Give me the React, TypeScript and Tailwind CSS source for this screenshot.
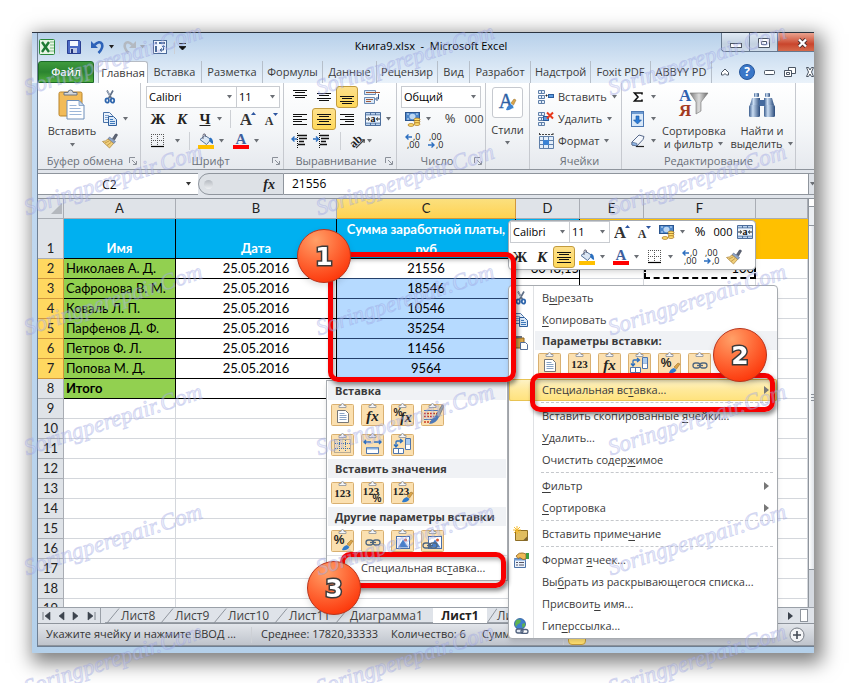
import React from "react";
import clsx from "clsx";

interface BoxProps {
  className?: string;
  children?: React.ReactNode;
}

interface ToolProps extends BoxProps {
  label: string;
  active?: boolean;
}

/* ---------- small building blocks ---------- */

const Icon: React.FC<BoxProps & { w?: number; h?: number }> = ({ w = 16, h = 16, className, children }) => (
  <svg width={w} height={h} viewBox={`0 0 ${w} ${h}`} fill="none" className={clsx("shrink-0", className)} aria-hidden="true">
    {children}
  </svg>
);

const Caret: React.FC<BoxProps> = ({ className = "text-[#6b6f75]" }) => (
  <Icon w={7} h={4} className={className}>
    <path d="M1 0h5L3.5 3.5z" fill="currentColor" />
  </Icon>
);

const Tool: React.FC<ToolProps> = ({ label, active, className, children }) => (
  <button
    type="button"
    aria-label={label}
    className={clsx(
      "flex h-[22px] shrink-0 items-center justify-center",
      active && "rounded-[3px] border border-[#c29b3d] bg-linear-to-b from-[#fde08b] to-[#ffd95a]",
      className
    )}
  >
    {children}
  </button>
);

const Divider: React.FC<BoxProps> = ({ className = "h-[18px]" }) => (
  <span className={clsx("w-px shrink-0 bg-[#cdd0d5]", className)} />
);

const Combo: React.FC<{ label: string; value: string; className?: string }> = ({ label, value, className }) => (
  <div className={clsx("relative h-[22px] shrink-0 border border-[#c9ccd1] bg-white", className)}>
    <select aria-label={label} defaultValue={value} className="block h-full w-full appearance-none pl-[2px] text-[11px] text-black outline-none">
      <option>{value}</option>
    </select>
    <Caret className="pointer-events-none absolute top-2 right-[3px] text-[#6b6f75]" />
  </div>
);

/* ---------- icons ---------- */

const Lines: React.FC<{ rows: [number, number][]; top?: number }> = ({ rows, top = 1 }) => (
  <Icon>
    {rows.map(([x, w], i) => (
      <rect key={i} x={x} y={top + Math.floor(i * 2.5)} width={w} height="1" fill="#111" />
    ))}
  </Icon>
);

const edge: [number, number][] = [[1, 14], [3, 10], [1, 14], [3, 10]];
const leftRows: [number, number][] = [[1, 14], [1, 9], [1, 14], [1, 9], [1, 14]];
const centerRows: [number, number][] = [[1, 14], [3, 10], [1, 14], [3, 10], [1, 14]];
const rightRows: [number, number][] = [[1, 14], [6, 9], [1, 14], [6, 9], [1, 14]];

const ScissorsIcon = () => (
  <Icon>
    <path d="M5 1.500l4.500 8M11 1.500L6.500 9.500" stroke="#5f6f86" strokeWidth="1.600" />
    <path d="M5.500 2l2.500 5" stroke="#c8d3e2" strokeWidth=".7" />
    <ellipse cx="5.200" cy="11.500" rx="1.700" ry="2.200" stroke="#2f66ad" strokeWidth="1.800" />
    <ellipse cx="10.500" cy="11.500" rx="1.700" ry="2.200" stroke="#2f66ad" strokeWidth="1.800" />
  </Icon>
);

const CopyIcon = () => (
  <Icon>
    <path d="M1.500 1.500h6l3 3v7h-9z" fill="#eaf2fb" stroke="#4a73a8" />
    <path d="M3 4.500h4M3 6.500h5M3 8.500h4" stroke="#7ba0cd" />
    <path d="M6.500 5.500h5l3 3v6h-8z" fill="#d9e8f8" stroke="#2f5f9d" />
    <path d="M8 8.500h3M8 10.500h5M8 12.500h5" stroke="#3f79bb" />
  </Icon>
);

const BrushIcon = () => (
  <Icon>
    <path d="M10.500 5.500l3-4.500q1.500-.5 2 1L12.500 7z" fill="#5d6576" stroke="#3c4250" strokeWidth=".6" />
    <path d="M7.500 4l6 4.500-1.500 2-6-4.500z" fill="#8fa6c8" stroke="#56688a" strokeWidth=".6" />
    <path d="M6 6l5.500 4.500L7.500 15 .5 8.500q3 0 5.500-2.500z" fill="#f0cf7a" stroke="#a8813a" strokeWidth=".7" />
    <path d="M3 10l4-2M5 12.500l4-3" stroke="#b98d3c" strokeWidth=".8" />
  </Icon>
);

const BordersIcon = () => (
  <Icon>
    <path d="M1.500 1v12M7.500 1v12M13.500 1v12M1 1.500h13M1 7.500h13" stroke="#555" strokeDasharray="1 1" />
    <path d="M1 13.500h13" stroke="#000" strokeWidth="1.200" />
  </Icon>
);

const BucketIcon = () => (
  <Icon>
    <path d="M2 6.500l5-4 6 4-4.500 5z" fill="#dbe7f5" stroke="#58759c" />
    <path d="M5 6V2.500Q5 .5 7 1l1 3" stroke="#667" strokeWidth="1" />
    <path d="M12 4.500q3.500 1 3 6.500Q12.500 10 11 7.500z" fill="#2a6fc0" />
    <rect y="12" width="16" height="4" fill="#ffc000" />
  </Icon>
);

const FontColorIcon = () => (
  <Icon>
    <text x="8" y="11" textAnchor="middle" fontSize="15" fontWeight="700" fontFamily="Liberation Serif, serif" fill="#3f5f9e">A</text>
    <rect y="12" width="16" height="4" fill="#f00" />
  </Icon>
);

const FontStepIcon: React.FC<{ grow?: boolean }> = ({ grow }) => (
  <Icon>
    <text x="6" y="14" textAnchor="middle" fontSize={grow ? 17 : 12} fontWeight="700" fontFamily="Liberation Serif, serif" fill="#333">A</text>
    <path d={grow ? "M11 4h5l-2.500-3z" : "M10 2h5l-2.500 3z"} fill="#2d55a0" />
  </Icon>
);

const WrapIcon = () => (
  <Icon>
    <path d="M.5 1.500h11v4H.5z" fill="#dce9f7" stroke="#6d8db6" />
    <path d="M.5 8.500h10v6H.5z" fill="#dce9f7" stroke="#6d8db6" />
    <path d="M2 3.500h14M2 10.500h7M2 12.500h5" stroke="#a3593a" strokeWidth="1.200" />
    <path d="M14.500 5v5h-2M13.500 8l-2 2 2 2" stroke="#35568a" />
  </Icon>
);

const MergeIcon = () => (
  <Icon>
    <path d="M.5 1.500h15v13H.5z" fill="#b9d2ee" stroke="#4d6e9c" />
    <path d="M5.500 1v3M10.500 1v3M5.500 12v3M10.500 12v3M0 4h16M0 12h16" stroke="#4d6e9c" />
    <path d="M1 4.500h14v7H1z" fill="#eef5fc" />
    <text x="8" y="11" textAnchor="middle" fontSize="10" fontWeight="700" fontFamily="Liberation Serif, serif" fill="#111">a</text>
    <path d="M1 8h3M12 8h3M3 6.500L4.800 8 3 9.500M13 6.500L11.200 8 13 9.500" stroke="#111" strokeWidth=".9" />
  </Icon>
);

const IndentIcon: React.FC<{ increase?: boolean }> = ({ increase }) => (
  <Icon>
    <path d="M7 2.500h9M8 5.500h8M8 8.500h5M7 11.500h7" stroke="#111" strokeWidth="1.400" />
    <path d="M6.500 0v16" stroke="#111" strokeDasharray="1 1" />
    <path d={increase ? "M0 6h5M3 3.500L5.500 6 3 8.500" : "M1 6h5M3.500 3.500L1 6l2.500 2.500"} stroke="#2c6fc0" strokeWidth="1.400" />
  </Icon>
);

const OrientationIcon = () => (
  <Icon>
    <text x="0" y="12" fontSize="12" fontWeight="700" fontFamily="Liberation Serif, serif" fill="#222" transform="rotate(-42 6 9)">ab</text>
    <path d="M6 15l8-8M14.500 6.500l-3.500.5M14.500 6.500L14 10" stroke="#444" strokeWidth="1.100" />
  </Icon>
);

const CurrencyIcon = () => (
  <Icon>
    <rect x=".5" y="1.500" width="14" height="8" fill="#4d86c9" stroke="#2b558f" />
    <ellipse cx="7.500" cy="5.500" rx="3" ry="2.700" fill="#bcd7f3" />
    <path d="M2 3h2M11 3h2M2 8h2" stroke="#cfe2f7" />
    <ellipse cx="12" cy="8.500" rx="3" ry="1.400" fill="#ffdf70" stroke="#a66f12" strokeWidth=".7" />
    <ellipse cx="12" cy="10.800" rx="3" ry="1.400" fill="#ffdf70" stroke="#a66f12" strokeWidth=".7" />
    <ellipse cx="12" cy="13.100" rx="3" ry="1.400" fill="#ffdf70" stroke="#a66f12" strokeWidth=".7" />
    <ellipse cx="6" cy="14" rx="3" ry="1.400" fill="#ffdf70" stroke="#a66f12" strokeWidth=".7" />
  </Icon>
);

const DigitsIcon: React.FC<{ less?: boolean }> = ({ less }) => (
  <Icon>
    <text x={less ? 1 : 8} y="7" fontSize="9" fontFamily="Open Sans, sans-serif" fill="#222">{less ? ",00" : ",0"}</text>
    <text x={less ? 8 : 2} y="15" fontSize="9" fontFamily="Open Sans, sans-serif" fill="#222">{less ? ",0" : ",00"}</text>
    <path d={less ? "M0 12h6M3.500 9.500L6 12l-2.500 2.500" : "M1 4h6M3.500 1.500L1 4l2.500 2.500"} stroke="#2c6fc0" strokeWidth="1.400" />
  </Icon>
);

const CellsIcon: React.FC<{ kind: "insert" | "delete" | "format" }> = ({ kind }) => (
  <Icon>
    {kind === "format" ? (
      <>
        <path d="M1.500 3.500h14v12h-14zM1 7.500h15M1 11.500h15M5.500 3v13M10.500 3v13" fill="#e3eefa" stroke="#5f7fa9" />
        <rect x="5" y="7" width="6" height="5" fill="#3b82d4" />
        <path d="M1 1.500h14M1.500 0v3M15 0v3" stroke="#444" strokeDasharray="2 1" />
      </>
    ) : (
      <>
        <path d="M.5 1.500h6v3h-6zM.5 6.500h6v3h-6zM.5 11.500h6v3h-6zM3.500 2v3M3.500 7v3M3.500 12v3" fill="#e3eefa" stroke="#5f7fa9" />
        {kind === "insert" ? (
          <>
            <path d="M7.500 6.500h2M8.500 5.500v2" stroke="#222" />
            <rect x="10.500" y="5.500" width="5" height="3" fill="#5c9be0" stroke="#2c5c9b" />
          </>
        ) : (
          <>
            <rect x="5.500" y="5.500" width="5" height="4" fill="#5c9be0" stroke="#2c5c9b" />
            <path d="M9 1.500l6 6M15 1.500l-6 6" stroke="#e8391c" strokeWidth="2" />
          </>
        )}
      </>
    )}
  </Icon>
);

const FillIcon = () => (
  <Icon>
    <rect x="1.500" y=".5" width="12" height="15" fill="#d8e8f9" stroke="#4b78b3" />
    <path d="M2 2h11" stroke="#6c9ad1" strokeWidth="2" />
    <path d="M6 5h3v4h2.500L7.500 13 3.500 9H6z" fill="#2b7bd6" stroke="#1b559c" strokeWidth=".6" />
  </Icon>
);

const EraserIcon = () => (
  <Icon>
    <path d="M9 2l5 1.500-1 3L7 13l-5-1V9z" fill="#f5f8fd" stroke="#56688a" />
    <path d="M2 9l5 1.500V13l-5-1z" fill="#8db5e6" stroke="#56688a" strokeWidth=".7" />
    <path d="M6 13.500h8" stroke="#222" strokeWidth="1.200" />
  </Icon>
);

const SortFilterIcon = () => (
  <Icon w={32} h={30}>
    <defs>
      <linearGradient id="funnel" x1="0" x2="1">
        <stop offset="0" stopColor="#7a7a7a" />
        <stop offset=".5" stopColor="#dcdcdc" />
        <stop offset="1" stopColor="#6a6a6a" />
      </linearGradient>
    </defs>
    <path d="M12 5h18l-7 9v9l-5 3V14z" fill="url(#funnel)" stroke="#777" strokeWidth=".6" />
    <text x="1" y="13" fontSize="17" fontWeight="700" fontFamily="Liberation Serif, serif" fill="#2f62b0">A</text>
    <text x="1" y="28" fontSize="17" fontWeight="700" fontFamily="Liberation Serif, serif" fill="#a33a22">Я</text>
  </Icon>
);

const BinocularsIcon = () => (
  <Icon w={28} h={28}>
    <defs>
      <linearGradient id="barrel" x1="0" x2="1">
        <stop offset="0" stopColor="#3d5f8f" />
        <stop offset=".35" stopColor="#c9dcf2" />
        <stop offset="1" stopColor="#28497a" />
      </linearGradient>
    </defs>
    <rect x="6" y="1" width="5" height="4" rx="1" fill="url(#barrel)" />
    <rect x="17" y="1" width="5" height="4" rx="1" fill="url(#barrel)" />
    <path d="M4 6h8v7H2z" fill="url(#barrel)" />
    <path d="M16 6h8l2 7H16z" fill="url(#barrel)" />
    <rect x="11" y="8" width="6" height="6" fill="#456a9e" />
    <rect x="1" y="13" width="11" height="12" rx="1.500" fill="url(#barrel)" />
    <rect x="16" y="13" width="11" height="12" rx="1.500" fill="url(#barrel)" />
  </Icon>
);

const PasteIcon = () => (
  <Icon w={28} h={31}>
    <rect x="1" y="3" width="23" height="24" rx="1.500" fill="#f2bb58" stroke="#b9852d" />
    <path d="M6 6V3.500h4Q10 1 12.500 1T15 3.500h4V6z" fill="#d4d8dd" stroke="#6d7480" />
    <path d="M9 11.500h12l5 5V30H9z" fill="#fff" stroke="#6f8fb9" />
    <path d="M21 11.500v5h5z" fill="#c9dbf0" stroke="#6f8fb9" strokeWidth=".7" />
    <path d="M11.500 16.500h7M11.500 19.500h11M11.500 22.500h12M11.500 25.500h12" stroke="#9db7d8" />
  </Icon>
);

const StylesIcon = () => (
  <Icon w={20} h={20}>
    <text x="8" y="15" textAnchor="middle" fontSize="20" fontFamily="Liberation Serif, serif" fill="#2c5fa5" stroke="#2c5fa5" strokeWidth=".4">A</text>
    <path d="M13 10l3-4 2 1-2.500 5z" fill="#d9a44a" stroke="#946a21" strokeWidth=".5" />
    <path d="M8 17q1-4 4.500-6l3 2Q13 18 8 17z" fill="#3c82d0" />
  </Icon>
);

const NoteIcon = () => (
  <Icon>
    <path d="M2.500 4.500h12v10h-12z" fill="#e0bd60" stroke="#8e6e24" />
    <path d="M14.500 10v4.500H10z" fill="#7a6330" />
    <path d="M4 0v8M0 4h8M1 1l6 6M7 1L1 7" stroke="#f6b81f" strokeWidth=".9" />
  </Icon>
);

const PropertiesIcon = () => (
  <Icon>
    <path d="M1.500 6.500h11v9h-11z" fill="#eaf2fc" stroke="#4d73a8" />
    <path d="M1 7.500h12" stroke="#6f9bd2" strokeWidth="2" />
    <path d="M3 10.500h2M6 10.500h5M3 13h2M6 13h5" stroke="#556" />
    <path d="M3 4q3-4 7-3l3 1v5l-3 .5-3-2-2 1z" fill="#efb957" stroke="#8e6322" strokeWidth=".8" />
    <path d="M13 1h3v6h-3z" fill="#3d9c45" />
  </Icon>
);

const GlobeIcon = () => (
  <Icon>
    <circle cx="7" cy="6" r="5.500" fill="#3f7fcd" stroke="#2b5b9b" strokeWidth=".8" />
    <path d="M3 2.500q3-2 5 0L7 5 4.500 6.500 3 9 2 6zM9 6l3-1v3l-2.500 2z" fill="#5fb44e" />
    <rect x="3" y="11" width="7" height="4" rx="2" stroke="#50617d" strokeWidth="1.300" fill="#dfe7f2" />
    <rect x="8" y="11.500" width="7" height="4" rx="2" stroke="#50617d" strokeWidth="1.300" />
  </Icon>
);

/* ---------- paste option tiles ---------- */

type TileKind =
  | "page" | "values" | "fx" | "transpose" | "format" | "link" | "percentFx" | "keep"
  | "noBorders" | "width" | "valuesPercent" | "valuesFormat" | "picture" | "linkedPicture";

const Glyph: React.FC<{ x: number; y: number; size: number; italic?: boolean; children: string }> = ({ x, y, size, italic, children }) => (
  <text x={x} y={y} textAnchor="middle" fontSize={size} fontWeight="700" fontStyle={italic ? "italic" : "normal"} fontFamily="Liberation Serif, serif" fill="#222">
    {children}
  </text>
);

const Percent: React.FC<{ x: number; y: number; size: number }> = ({ x, y, size }) => (
  <text x={x} y={y} textAnchor="middle" fontSize={size} fontWeight="700" fontFamily="Liberation Sans, sans-serif" fill="#222">%</text>
);

const SmallBrush = () => (
  <>
    <path d="M16 15l4-4 2 1-3.500 5z" fill="#d9a44a" stroke="#946a21" strokeWidth=".5" />
    <path d="M11 21q1-4 5-5l2.500 2Q16 22 11 21z" fill="#2f7acb" />
  </>
);

const Chain = ({ dx = 0, dy = 0 }) => (
  <g transform={`translate(${dx} ${dy})`} stroke="#51677f" strokeWidth="1.300">
    <rect x="5" y="11" width="7" height="5" rx="2.500" />
    <rect x="12" y="11" width="7" height="5" rx="2.500" />
    <path d="M9 13.500h6" />
  </g>
);

const Picture = ({ dx = 0 }) => (
  <g transform={`translate(${dx} 0)`}>
    <rect x="5.500" y="7.500" width="13" height="12" fill="#fff" stroke="#4a6fa8" />
    <path d="M7 18.500l5-8 5.500 8z" fill="#4a7fc8" />
    <circle cx="14.500" cy="11" r="1.500" fill="#d2553a" />
  </g>
);

const tileArt: Record<TileKind, React.ReactNode> = {
  page: (
    <>
      <path d="M6.500 7.500h8l3 3v9h-11z" fill="#fff" stroke="#777" />
      <path d="M8.500 10.500h5M8.500 12.500h7M8.500 14.500h7M8.500 16.500h7" stroke="#8aa4c6" />
    </>
  ),
  values: <Glyph x={11.500} y={16} size={11}>123</Glyph>,
  fx: <Glyph x={11.500} y={18} size={15} italic>fx</Glyph>,
  percentFx: (
    <>
      <Percent x={7} y={13} size={10} />
      <Glyph x={15} y={19} size={14} italic>fx</Glyph>
    </>
  ),
  keep: (
    <>
      <path d="M3 7.500h14M3 16.500h8" stroke="#4f76ad" />
      <path d="M3 10.500h13M3 13.500h10M3 19h7" stroke="#c93a26" strokeWidth="1.600" strokeDasharray="2 1" />
      <path d="M15 12l6-10 2 1-5 11z" fill="#9aa0a8" stroke="#555" strokeWidth=".5" />
      <path d="M8 21q3-6 7-9l3 2q-3 7-10 7z" fill="#4d79b8" />
    </>
  ),
  noBorders: (
    <>
      <path d="M3.500 6.500h16v13h-16z" stroke="#777" strokeDasharray="1 1" />
      <path d="M8.500 7v12M14.500 7v12M4 10.500h15M4 15.500h15" stroke="#3f6fae" strokeDasharray="1 1" />
    </>
  ),
  width: (
    <>
      <path d="M3 9h7M13 9h7M5 7L3 9l2 2M18 7l2 2-2 2" stroke="#2c6fc0" strokeWidth="1.400" />
      <path d="M5.500 14.500h12v6h-12z" fill="#fff" stroke="#4f76ad" />
      <path d="M6 15.500h11" stroke="#8bb1de" strokeWidth="2" />
    </>
  ),
  transpose: (
    <>
      <path d="M14.500 5.500h5v11h-5zM14.500 11h5" fill="#fff" stroke="#4f76ad" />
      <path d="M15 6h4v5h-4z" fill="#a9cbf0" />
      <path d="M2.500 15.500h10v5h-10zM7.500 15.500v5" fill="#fff" stroke="#4f76ad" />
      <path d="M5 13V9q0-1 1-1h5M9 6l2.500 2L9 10M3 11.500L5 14l2-2.500" stroke="#2c6fc0" strokeWidth="1.300" />
    </>
  ),
  format: (
    <>
      <Percent x={8} y={15} size={12} />
      <SmallBrush />
    </>
  ),
  link: <Chain />,
  valuesPercent: (
    <>
      <Glyph x={10} y={14} size={11}>123</Glyph>
      <Percent x={16} y={21} size={10} />
    </>
  ),
  valuesFormat: (
    <>
      <Glyph x={10} y={14} size={11}>123</Glyph>
      <SmallBrush />
    </>
  ),
  picture: <Picture />,
  linkedPicture: (
    <>
      <Picture dx={2} />
      <Chain dx={-3} dy={3} />
    </>
  ),
};

const PasteTile: React.FC<{ kind: TileKind }> = ({ kind }) => (
  <button type="button" aria-label={kind} className="h-[23px] w-[23px] shrink-0">
    <Icon w={23} h={23}>
      <rect x=".5" y="1.500" width="22" height="21" rx="1" fill="#fbe0b0" stroke="#d9b071" />
      <path d="M8 4.500V2.500h2Q10 .5 11.500.5T13 2.500h2v2z" fill="#f4f5f7" stroke="#8b8f97" strokeWidth=".8" />
      {tileArt[kind]}
    </Icon>
  </button>
);

/* ---------- title bar and tabs ---------- */

const TitleBar = () => (
  <div className="relative flex h-7 items-center pl-px">
    <Icon>
      <rect x=".5" y=".5" width="15" height="15" rx="1" fill="#e9f5e6" stroke="#2c8a3d" />
      <path d="M11 3h4M11 6h4M11 9h4M11 12h4" stroke="#7bb87f" />
      <path d="M3 3l7 10M10 3L3 13" stroke="#1f7a34" strokeWidth="2.400" />
    </Icon>
    <Divider className="mx-1 h-[13px] bg-[#7a8797]" />
    <Tool label="Сохранить" className="w-5">
      <Icon>
        <path d="M1.500 1.500h12l1 1v12h-13z" fill="#4a69c4" stroke="#2a3f92" />
        <rect x="4" y="2" width="8" height="5" fill="#f4f7fd" />
        <rect x="4" y="9" width="7" height="5" fill="#bfc9e6" />
        <rect x="5" y="10" width="2" height="4" fill="#24357c" />
      </Icon>
    </Tool>
    <Tool label="Отменить" className="ml-1 w-5">
      <Icon>
        <path d="M4.500 6q5-5 7.500-1 1.500 4-3.500 9" stroke="#2d62b8" strokeWidth="2.600" />
        <path d="M1 2v7h7z" fill="#2d62b8" />
      </Icon>
    </Tool>
    <Caret className="text-[#222]" />
    <Tool label="Вернуть" className="ml-1 w-5">
      <Icon>
        <path d="M11.500 6Q6.500 1 4 5q-1.500 4 3.500 9" stroke="#b3b9c1" strokeWidth="2.600" />
        <path d="M15 2v7H8z" fill="#b3b9c1" />
      </Icon>
    </Tool>
    <Caret className="text-[#a3a9b1]" />
    <Tool label="Сводная таблица" className="ml-1 w-5">
      <Icon>
        <rect x="1.500" y="1.500" width="13" height="13" fill="#f2f7fd" stroke="#4b6a99" />
        <path d="M3 4h2M7 4h6M4 7v6" stroke="#4b6a99" strokeWidth="2" />
        <path d="M11.500 7v4h-3M10 9.500L8 11l2 1.500M10 8l1.500-1.500L13 8" stroke="#33558c" />
      </Icon>
    </Tool>
    <Divider className="mx-1 h-[13px] bg-[#7a8797]" />
    <Icon w={7} h={8}>
      <path d="M0 .5h7M0 3.500h7L3.500 7z" fill="#111" stroke="#111" strokeWidth=".8" />
    </Icon>
    <h1 className="absolute inset-x-0 top-[3px] pl-[10px] text-center text-[11px] leading-5 text-black">Книга9.xlsx&nbsp; -&nbsp; Microsoft Excel</h1>
    <div className="absolute top-0 right-0 flex h-[19px] overflow-hidden rounded-bl-[4px] border-b border-l border-[#66788f]">
      <Tool label="Свернуть" className="w-7 border-r border-[#66788f] bg-linear-to-b from-[#dfe9f4] via-[#c3d1e0] to-[#d5e2f0]">
        <Icon w={12} h={8}>
          <rect x=".5" y="3.500" width="11" height="4" fill="#fff" stroke="#4b5563" />
        </Icon>
      </Tool>
      <Tool label="Развернуть" className="w-7 border-r border-[#66788f] bg-linear-to-b from-[#dfe9f4] via-[#c3d1e0] to-[#d5e2f0]">
        <Icon w={12} h={14}>
          <path d="M.5 1.500h11v9H.5zM3.500 4.500h5v3h-5z" fill="#fff" stroke="#4b5563" />
        </Icon>
      </Tool>
      <Tool label="Закрыть" className="w-9 bg-linear-to-b from-[#e9a28f] via-[#c9452c] to-[#dc7d5c] pl-3">
        <Icon w={13} h={14}>
          <path d="M3 2.500l7 7M10 2.500l-7 7" stroke="#4b3030" strokeWidth="4" />
          <path d="M3 2.500l7 7M10 2.500l-7 7" stroke="#fff" strokeWidth="2.400" />
        </Icon>
      </Tool>
    </div>
  </div>
);

const tabs: { text: string; width: string }[] = [
  { text: "Вставка", width: "w-[54px]" },
  { text: "Разметка", width: "w-[61px]" },
  { text: "Формулы", width: "w-[60px]" },
  { text: "Данные", width: "w-[54px]" },
  { text: "Рецензир", width: "w-[61px]" },
  { text: "Вид", width: "w-8" },
  { text: "Разработ", width: "w-[61px]" },
  { text: "Надстрой", width: "w-[60px]" },
  { text: "Foxit PDF", width: "w-[60px]" },
  { text: "ABBYY PD", width: "w-[61px]" },
];

const TabStrip = () => (
  <nav className="flex h-[22px] overflow-hidden text-[11px] leading-[22px] text-[#3b3b3b]">
    <button type="button" className="w-[56px] shrink-0 rounded-t-[3px] border border-[#1c6b28] bg-linear-to-b from-[#3f9a3d] via-[#2b8430] to-[#4fae3c] leading-5 font-semibold text-white">
      Файл
    </button>
    <button type="button" className="ml-1 w-[50px] shrink-0 rounded-t-[3px] border border-b-0 border-[#b6bcc5] bg-white">
      <span className="-mx-2">Главная</span>
    </button>
    {tabs.map((tab) => (
      <button key={tab.text} type="button" className={clsx("shrink-0 overflow-hidden border-r border-[#b6bfca] px-1 whitespace-nowrap", tab.width)}>
        {tab.text}
      </button>
    ))}
    <div className="flex shrink-0 items-center gap-[9px] pl-2">
      <Icon w={10} h={10}>
        <path d="M1.500 5.500L5 2l3.500 3.500V8H6.500L5 6.500 3.500 8h-2z" fill="#fff" stroke="#4b5563" />
      </Icon>
      <Icon w={16} h={16}>
        <circle cx="8" cy="8" r="7.500" fill="#3a77c8" stroke="#27579c" />
        <text x="8" y="12" textAnchor="middle" fontSize="12" fontWeight="700" fontFamily="Open Sans, sans-serif" fill="#fff">?</text>
      </Icon>
      <Icon w={11} h={12}>
        <rect x=".5" y="4.500" width="10" height="4" rx="1" fill="#fff" stroke="#4b5563" />
      </Icon>
      <Icon w={12} h={12}>
        <path d="M4.500 1.500h7v6h-7z" fill="#fff" stroke="#4b5563" />
        <path d="M.5 4.500h7v6h-7zM2.500 6.500h3v2h-3z" fill="#fff" stroke="#4b5563" />
      </Icon>
      <Icon w={10} h={12}>
        <path d="M1.500 1.500h2L5 4l1.500-2.500h2L6.500 6l2 4.500h-2L5 8l-1.500 2.500h-2L3.500 6z" fill="#fff" stroke="#4b5563" />
      </Icon>
    </div>
  </nav>
);

/* ---------- ribbon ---------- */

const Group: React.FC<BoxProps & { label?: string; launcher?: boolean }> = ({ label, launcher, className, children }) => (
  <section className={clsx("flex shrink-0 flex-col border-r border-[#c6c9cf] pt-[3px]", className)}>
    <div className="h-[67px]">{children}</div>
    <div className="flex h-4 items-center px-[3px] text-[11px] leading-4 text-[#6a7079]">
      <span className="flex-1 text-center whitespace-nowrap">{label}</span>
      {launcher && (
        <Icon w={8} h={8}>
          <path d="M.5 6V.5H6M3 3l4 4M7.500 4v3.500H4" stroke="#8b9099" />
        </Icon>
      )}
    </div>
  </section>
);

const Row: React.FC<BoxProps> = ({ className, children }) => (
  <div className={clsx("flex h-[22px] items-center", className)}>{children}</div>
);

const serif = "font-['Liberation_Serif',serif] text-[15px] font-bold text-[#222]";

const Ribbon = () => (
  <div className="flex h-[87px] overflow-hidden border-b border-[#8e949c] bg-linear-to-b from-white via-[#f5f7f9] to-[#e6e9ee] text-[11px] text-[#3b3b3b]">
    <Group label="Буфер обмена" launcher className="w-[103px]">
      <div className="flex">
        <button type="button" className="flex h-[66px] w-16 flex-col items-center pt-[3px] pl-1">
          <PasteIcon />
          <span className="mt-[2px] leading-[17px]">Вставить</span>
          <Caret className="mt-1 text-[#6b6f75]" />
        </button>
        <div>
          <Tool label="Вырезать" className="w-[15px]"><ScissorsIcon /></Tool>
          <Tool label="Копировать" className="gap-1"><CopyIcon /><Caret /></Tool>
          <Tool label="Формат по образцу" className="w-4"><BrushIcon /></Tool>
        </div>
      </div>
    </Group>

    <Group label="Шрифт" launcher className="w-[143px] pl-[5px]">
      <Row>
        <Combo label="Шрифт" value="Calibri" className="w-[91px]" />
        <Combo label="Размер" value="11" className="w-[43px] border-l-0" />
      </Row>
      <Row>
        <Tool label="Полужирный" className={clsx("w-6", serif)}>Ж</Tool>
        <Tool label="Курсив" className={clsx("w-6 italic", serif)}>К</Tool>
        <Tool label="Подчеркнутый" className={clsx("w-[22px] underline", serif)}>Ч</Tool>
        <Caret />
        <Divider className="mr-[5px] ml-[7px] h-[18px]" />
        <Tool label="Увеличить размер" className="w-6"><FontStepIcon grow /></Tool>
        <Tool label="Уменьшить размер" className="w-[22px]"><FontStepIcon /></Tool>
      </Row>
      <Row className="pl-1">
        <BordersIcon />
        <Caret className="ml-2 text-[#6b6f75]" />
        <Divider className="mx-2 h-[18px]" />
        <BucketIcon />
        <Caret className="mr-2 ml-1 text-[#6b6f75]" />
        <FontColorIcon />
        <Caret className="ml-1 text-[#6b6f75]" />
      </Row>
    </Group>

    <Group label="Выравнивание" launcher className="w-[113px]">
      <div className="pl-1">
        <Row>
          <Tool label="По верхнему краю" className="w-6"><Lines rows={edge} top={1} /></Tool>
          <Tool label="По середине" className="w-6"><Lines rows={edge} top={4} /></Tool>
          <Tool label="По нижнему краю" active className="w-[22px]"><Lines rows={edge} top={7} /></Tool>
          <Tool label="Перенос текста" className="ml-1 w-5"><WrapIcon /></Tool>
        </Row>
        <Row>
          <Tool label="По левому краю" className="w-6"><Lines rows={leftRows} top={3} /></Tool>
          <Tool label="По центру" active className="w-6"><Lines rows={centerRows} top={3} /></Tool>
          <Tool label="По правому краю" className="w-[22px]"><Lines rows={rightRows} top={3} /></Tool>
          <Tool label="Объединить" className="ml-1 w-8 gap-1"><MergeIcon /><Caret /></Tool>
        </Row>
        <Row>
          <Tool label="Уменьшить отступ" className="w-[22px]"><IndentIcon /></Tool>
          <Tool label="Увеличить отступ" className="w-[22px]"><IndentIcon increase /></Tool>
          <Divider className="mr-[9px] ml-2 h-[18px]" />
          <Tool label="Ориентация"><OrientationIcon /><Caret /></Tool>
        </Row>
      </div>
    </Group>

    <Group label="Число" launcher className="w-[89px]">
      <div className="pl-1">
        <Combo label="Формат числа" value="Общий" className="w-20" />
        <Row>
          <Tool label="Денежный формат" className="ml-1 gap-1"><CurrencyIcon /><Caret /></Tool>
          <Tool label="Процентный формат" className="ml-2 w-5 text-[13px]">%</Tool>
          <Tool label="Разделитель разрядов" className="w-7">000</Tool>
        </Row>
        <Row>
          <Tool label="Увеличить разрядность" className="w-6"><DigitsIcon /></Tool>
          <Tool label="Уменьшить разрядность" className="w-[22px]"><DigitsIcon less /></Tool>
        </Row>
      </div>
    </Group>

    <Group className="w-11">
      <button type="button" className="flex w-full flex-col items-center pt-px">
        <span className="flex h-[31px] w-[31px] items-center justify-center rounded-[3px] border border-[#c6c9cf] bg-white">
          <StylesIcon />
        </span>
        <span className="mt-[3px] leading-[17px]">Стили</span>
        <Caret className="mt-[3px] text-[#6b6f75]" />
      </button>
    </Group>

    <Group label="Ячейки" className="w-[92px] pl-2">
      <Row className="gap-1"><CellsIcon kind="insert" /><button type="button">Вставить</button><Caret /></Row>
      <Row className="gap-1"><CellsIcon kind="delete" /><button type="button">Удалить</button><Caret /></Row>
      <Row className="gap-1"><CellsIcon kind="format" /><button type="button">Формат</button><Caret /></Row>
    </Group>

    <Group label="Редактирование" className="w-[174px]">
      <div className="flex">
        <div className="w-9 pl-2">
          <Tool label="Сумма" className="gap-1">
            <Icon>
              <path d="M12 5.500V4H4.500L8 8l-3.500 4H12v-1.500" stroke="#111" strokeWidth="1.600" />
            </Icon>
            <Caret />
          </Tool>
          <Tool label="Заполнить" className="gap-1"><FillIcon /><Caret /></Tool>
          <Tool label="Очистить" className="gap-1"><EraserIcon /><Caret /></Tool>
        </div>
        <button type="button" className="flex w-[72px] flex-col items-center pt-[2px] leading-[13px] whitespace-nowrap">
          <SortFilterIcon />
          <span className="mt-[6px]">Сортировка</span>
          <span className="flex items-center gap-1">и фильтр <Caret /></span>
        </button>
        <button type="button" className="flex w-16 flex-col items-center pt-[2px] leading-[13px] whitespace-nowrap">
          <span className="h-[30px] pt-1"><BinocularsIcon /></span>
          <span className="mt-[6px]">Найти и</span>
          <span className="flex items-center gap-1">выделить <Caret /></span>
        </button>
      </div>
    </Group>
  </div>
);

const FormulaBar = () => (
  <div className="flex h-[29px] border-b border-[#8e949c] bg-[#e1e5eb] pt-[3px] pb-[3px] text-[12px] text-black">
    <div className="relative w-[160px] shrink-0 border-y border-[#8f959d] bg-white">
      <input aria-label="Поле имени" defaultValue="C2" className="h-full w-[143px] text-center outline-none" />
      <Caret className="absolute top-2 right-[6px] text-[#333]" />
    </div>
    <div className="flex w-[86px] shrink-0 items-center justify-between rounded-l-full border border-[#8f959d] bg-[#dde1e6] pr-2 pl-[5px]">
      <span className="h-[9px] w-[9px] rounded-full bg-linear-to-b from-[#b5bac1] to-[#eef0f3]" />
      <span className="font-['Liberation_Serif',serif] text-[14px] font-bold text-[#222] italic">fx</span>
    </div>
    <input aria-label="Строка формул" defaultValue="21556" className="min-w-0 flex-1 border-y border-[#8f959d] bg-white pl-2 outline-none" />
    <span className="flex w-[6px] items-center overflow-hidden border border-r-0 border-[#8f959d] bg-[#dfe3e9]"><Caret /></span>
  </div>
);

/* ---------- worksheet ---------- */

const columns = [
  { name: "A", width: "w-28" },
  { name: "B", width: "w-[161px]" },
  { name: "C", width: "w-[179px]" },
  { name: "D", width: "w-16" },
  { name: "E", width: "w-16" },
  { name: "F", width: "w-28" },
  { name: "", width: "w-auto" },
];

const people = [
  ["Николаев А. Д.", "25.05.2016", "21556", "6048,15", "106"],
  ["Сафронова В. М.", "25.05.2016", "18546", "", ""],
  ["Коваль Л. П.", "25.05.2016", "10546", "", ""],
  ["Парфенов Д. Ф.", "25.05.2016", "35254", "", ""],
  ["Петров Ф. Л.", "25.05.2016", "11456", "", ""],
  ["Попова М. Д.", "25.05.2016", "9564", "", ""],
];

const rest = [9, 10, 11, 12, 13, 14, 15, 16, 17, 18, 19];
const headCell = "border-r border-b border-[#a9adb4] bg-[#dfe3e8] p-0 text-center font-normal text-[#222]";
const blank = "border-r border-b border-[#d4d7dc] p-0";
const inked = "border-r border-b border-black p-0";

const Sheet = () => (
  <div className="flex h-[408px]">
    <div className="min-w-0 flex-1 overflow-hidden bg-white">
      <table className="w-full table-fixed border-separate border-spacing-0 font-[Lato,'Open_Sans',sans-serif] text-[13px] leading-[19px] text-black">
        <thead>
          <tr className="h-5">
            <th className={clsx(headCell, "w-[26px]")}>
              <Icon w={12} h={12} className="ml-auto">
                <path d="M11 0v11H0z" fill="#b4b8be" />
              </Icon>
            </th>
            {columns.map((col, i) => (
              <th key={i} className={clsx(headCell, col.width, col.name === "C" && "border-[#d1973c] bg-linear-to-b from-[#fbe07e] to-[#ffd24f]")}>
                {col.name}
              </th>
            ))}
          </tr>
        </thead>
        <tbody>
          <tr className="h-10 font-bold text-white">
            <th className={clsx(headCell, "align-bottom")}>1</th>
            <td className={clsx(inked, "bg-[#00b0f0] text-center align-bottom")}>Имя</td>
            <td className={clsx(inked, "bg-[#00b0f0] text-center align-bottom")}>Дата</td>
            <td className={clsx(inked, "bg-[#00b0f0] text-center align-top leading-5")}>
              <div className="h-[39px] overflow-hidden whitespace-nowrap">Сумма заработной платы,<br />руб</div>
            </td>
            <td className={clsx(inked, "bg-[#00b0f0]")} />
            <td className="bg-[#ffc000] p-0" />
            <td className="bg-[#ffc000] p-0" />
            <td className="bg-[#ffc000] p-0" />
          </tr>
          {people.map(([name, date, sum, extra, last], i) => (
            <tr key={name} className="h-5">
              <th className={clsx(headCell, "border-[#d1973c] bg-[#ffd860]")}>{i + 2}</th>
              <td className={clsx(inked, "overflow-hidden bg-[#92d050] pl-[2px] whitespace-nowrap")}>{name}</td>
              <td className={clsx(inked, "text-center")}>{date}</td>
              <td className={clsx("border-r border-b border-[#24406b] p-0 text-center", i > 0 && "bg-[#b6daff]")}>{sum}</td>
              <td className={clsx(inked, "text-right")}>{extra}</td>
              <td className={blank} />
              <td className={clsx("p-0 text-right", i === 0 ? "border-2 border-t-0 border-dashed border-black leading-[18px]" : "border-r border-b border-[#d4d7dc]")}>{last}</td>
              <td className={blank} />
            </tr>
          ))}
          <tr className="h-5">
            <th className={headCell}>8</th>
            <td className={clsx(inked, "bg-[#92d050] pl-[2px] font-bold")}>Итого</td>
            <td className={inked} />
            <td className={inked} />
            {columns.slice(3).map((_, i) => <td key={i} className={blank} />)}
          </tr>
          {rest.map((row) => (
            <tr key={row} className="h-5">
              <th className={headCell}>{row}</th>
              {columns.map((_, i) => <td key={i} className={blank} />)}
            </tr>
          ))}
        </tbody>
      </table>
    </div>
    <div className="flex w-[6px] shrink-0 flex-col overflow-hidden border-l border-[#8f959d] bg-[#d5dae1]">
      <span className="h-2 border-b border-[#8f959d] bg-white" />
      <span className="h-[18px] bg-[#eceff3]" />
      <span className="flex h-[345px] items-center border-y border-[#8f959d] bg-linear-to-r from-white to-[#dfe3e9]">
        <Icon w={6} h={9}>
          <path d="M2 1.500h4M2 4.500h4M2 7.500h4" stroke="#8a9099" />
        </Icon>
      </span>
    </div>
  </div>
);

const sheetTabs = [
  { name: "Лист8", width: "w-[54px]" },
  { name: "Лист9", width: "w-[53px]" },
  { name: "Лист10", width: "w-[61px]" },
  { name: "Лист11", width: "w-[61px]" },
  { name: "Диаграмма1", width: "w-[99px]" },
];

const navArrows = ["M1 1v8M8 1v8L3 5z", "M7 1v8L2 5z", "M2 1v8l5-4z", "M2 1v8l5-4zM9 1v8"];

const SheetTabs = () => (
  <div className="flex h-4 overflow-hidden border-t border-[#9aa0a8] bg-[#dfe3e9] text-[12px] leading-[15px] text-[#444]">
    <div className="flex w-[63px] shrink-0 items-center justify-between border-r border-[#9aa0a8] px-1">
      {navArrows.map((d) => (
        <Icon key={d} w={10} h={10}>
          <path d={d} fill="#3c434d" stroke="#3c434d" strokeWidth=".6" />
        </Icon>
      ))}
    </div>
    <div className="ml-1 flex">
      {sheetTabs.map((tab) => (
        <button key={tab.name} type="button" className={clsx("flex shrink-0 border-b border-[#9aa0a8] whitespace-nowrap", tab.width)}>
          <Icon w={16} h={15}>
            <path d="M2 15L14 .5" stroke="#8f959d" />
          </Icon>
          {tab.name}
        </button>
      ))}
      <button type="button" className="w-[54px] shrink-0 bg-white text-center font-bold text-[#222]">Лист1</button>
      <button type="button" className="flex w-6 shrink-0 overflow-hidden border-b border-[#9aa0a8]">
        <Icon w={10} h={15}>
          <path d="M0 15L10 .5" stroke="#8f959d" />
        </Icon>
        Лист2
      </button>
    </div>
    <div className="ml-auto flex shrink-0 items-center gap-1 pr-[6px]">
      <Icon w={10} h={10}>
        <path d={navArrows[2]} fill="#3c434d" />
      </Icon>
      <span className="flex h-[13px] w-2 border border-[#8f959d] bg-white" />
    </div>
  </div>
);

const StatusBar = () => (
  <footer className="flex h-[23px] items-center overflow-hidden border-y border-[#8e949c] bg-linear-to-b from-[#e2e5ea] to-[#bfc4cc] text-[11px] whitespace-nowrap text-[#333]">
    <span className="w-[213px] shrink-0 pl-2">Укажите ячейку и нажмите ВВОД ...</span>
    <Divider className="h-4 bg-[#8e949c]" />
    <span className="w-[130px] shrink-0 pl-[9px]">Среднее: 17820,33333</span>
    <span className="w-[91px] shrink-0 pl-[9px]">Количество: 6</span>
    <span className="w-[90px] shrink-0 pl-[9px]">Сумма: 106922</span>
    <Divider className="h-full bg-[#8e949c]" />
    <span className="ml-1 h-5 w-[18px] rounded-sm border border-[#c29b3d] bg-[#ffdf70]" />
    <span className="ml-auto flex h-4 w-4 shrink-0 items-center justify-center">
      <Icon>
        <circle cx="8" cy="8" r="7" fill="#f4f5f7" stroke="#777d86" />
        <path d="M8 4v8M4 8h8" stroke="#444b55" strokeWidth="1.600" />
      </Icon>
    </span>
    <span className="w-[9px] shrink-0" />
  </footer>
);

/* ---------- floating menus ---------- */

const MiniToolbar = () => (
  <div className="absolute top-[187px] left-[476px] h-[50px] w-[248px] rounded-sm border border-[#a7abb0] bg-white text-[11px] shadow-md">
    <Row className="pl-px">
      <Combo label="Шрифт мини-панели" value="Calibri" className="w-[60px]" />
      <Combo label="Размер мини-панели" value="11" className="w-10 border-l-0" />
      <Tool label="Увеличить шрифт" className="w-6"><FontStepIcon grow /></Tool>
      <Tool label="Уменьшить шрифт" className="w-5"><FontStepIcon /></Tool>
      <Tool label="Деньги" className="ml-[2px] w-8 gap-1"><CurrencyIcon /><Caret /></Tool>
      <Tool label="Проценты" className="w-6 text-[13px]">%</Tool>
      <Tool label="Разряды" className="w-[22px]">000</Tool>
      <Tool label="Объединить ячейки" className="w-[22px]"><MergeIcon /></Tool>
    </Row>
    <Row className="mt-[3px]">
      <Tool label="Жирный" className={clsx("w-[22px]", serif)}>Ж</Tool>
      <Tool label="Наклонный" className={clsx("w-[22px] italic", serif)}>К</Tool>
      <Tool label="Центр" active className="w-[22px]"><Lines rows={centerRows} top={3} /></Tool>
      <Tool label="Заливка" className="w-[34px] gap-1"><BucketIcon /><Caret /></Tool>
      <Tool label="Цвет текста" className="w-[34px] gap-1"><FontColorIcon /><Caret /></Tool>
      <Tool label="Границы" className="w-[34px] gap-1"><BordersIcon /><Caret /></Tool>
      <Tool label="Больше знаков" className="ml-[2px] w-[22px]"><DigitsIcon /></Tool>
      <Tool label="Меньше знаков" className="w-[22px]"><DigitsIcon less /></Tool>
      <Tool label="Кисть" className="w-[22px]"><BrushIcon /></Tool>
    </Row>
  </div>
);

interface MenuEntryProps {
  text: [string, string, string];
  icon?: React.ReactNode;
  arrow?: boolean;
  selected?: boolean;
}

const MenuEntry: React.FC<MenuEntryProps> = ({ text, icon, arrow, selected }) => (
  <button
    type="button"
    className={clsx(
      "flex h-[22px] w-full items-center text-left whitespace-nowrap",
      selected && "rounded-[2px] bg-linear-to-b from-[#fdf3c8] via-[#ffe99a] to-[#ffe27a] ring-1 ring-[#e8c353] ring-inset"
    )}
  >
    <span className="flex w-[33px] shrink-0 pl-1">{icon}</span>
    <span className="flex-1">
      {text[0]}
      <span className="underline underline-offset-2">{text[1]}</span>
      {text[2]}
    </span>
    {arrow && (
      <Icon w={5} h={8} className="mr-2">
        <path d="M0 0v8l5-4z" fill="#777" />
      </Icon>
    )}
  </button>
);

const MenuRule = () => <hr className="mt-px mr-1 mb-[2px] ml-8 border-t border-dashed border-[#c5c8cc]" />;

const ContextMenu = () => (
  <div className="absolute top-[252px] left-[476px] w-[270px] rounded-sm border border-[#a7abb0] bg-white py-px text-[11px] text-[#3b3b3b] shadow-md">
    <div className="absolute inset-y-0 left-6 w-px bg-[#dfe1e4]" />
    <div className="relative">
      <MenuEntry icon={<ScissorsIcon />} text={["В", "ы", "резать"]} />
      <MenuEntry icon={<CopyIcon />} text={["", "К", "опировать"]} />
      <div className="relative ml-[26px] h-[19px] bg-[#f0f2f5] pl-[7px] leading-5 font-bold">Параметры вставки:</div>
      <div className="flex h-[29px] gap-[7px] pt-[2px] pl-[29px]">
        <PasteTile kind="page" />
        <PasteTile kind="values" />
        <PasteTile kind="fx" />
        <PasteTile kind="transpose" />
        <PasteTile kind="format" />
        <PasteTile kind="link" />
      </div>
      <MenuEntry selected arrow text={["Специальная вс", "т", "авка..."]} />
      <MenuRule />
      <MenuEntry text={["Вставить скопированные ", "я", "чейки..."]} />
      <MenuEntry text={["", "У", "далить..."]} />
      <MenuEntry text={["Очистить содер", "ж", "имое"]} />
      <MenuRule />
      <MenuEntry arrow text={["", "Ф", "ильтр"]} />
      <MenuEntry arrow text={["", "С", "ортировка"]} />
      <MenuRule />
      <MenuEntry icon={<NoteIcon />} text={["Вставить приме", "ч", "ание"]} />
      <MenuRule />
      <MenuEntry icon={<PropertiesIcon />} text={["Формат ", "я", "чеек..."]} />
      <MenuEntry text={["Вы", "б", "рать из раскрывающегося списка..."]} />
      <MenuEntry text={["Присвоит", "ь", " имя..."]} />
      <MenuEntry icon={<GlobeIcon />} text={["Гип", "е", "рссылка..."]} />
      <div className="absolute top-12 left-1">
        <Icon>
          <path d="M1 3h10v10H1z" fill="#dca84b" stroke="#8d651f" />
          <path d="M3 3V1h6v2z" fill="#6d7480" />
          <path d="M7.500 7.500h5l2 2v5h-7z" fill="#fff" stroke="#55709a" />
        </Icon>
      </div>
    </div>
  </div>
);

const SubHeader: React.FC<BoxProps> = ({ children }) => (
  <div className="mx-px h-[19px] bg-[#f0f2f5] pl-[7px] leading-5 font-bold">{children}</div>
);

const TileRow: React.FC<{ kinds: TileKind[] }> = ({ kinds }) => (
  <div className="flex gap-[7px] pl-1">
    {kinds.map((kind) => <PasteTile key={kind} kind={kind} />)}
  </div>
);

const PasteSubmenu = () => (
  <div className="absolute top-[347px] left-[294px] w-[182px] border border-[#a7abb0] bg-white text-[11px] text-[#3b3b3b] shadow-md">
    <SubHeader>Вставка</SubHeader>
    <div className="flex flex-col gap-[7px] py-[3px]">
      <TileRow kinds={["page", "fx", "percentFx", "keep"]} />
      <TileRow kinds={["noBorders", "width", "transpose"]} />
    </div>
    <SubHeader>Вставить значения</SubHeader>
    <div className="py-[3px]">
      <TileRow kinds={["values", "valuesPercent", "valuesFormat"]} />
    </div>
    <SubHeader>Другие параметры вставки</SubHeader>
    <div className="py-[3px]">
      <TileRow kinds={["format", "link", "picture", "linkedPicture"]} />
    </div>
    <button type="button" className="block h-[25px] w-full border-t border-[#e1e3e6] pl-[34px] text-left">
      Специальная вс<span className="underline underline-offset-2">т</span>авка...
    </button>
  </div>
);

/* ---------- step callouts ---------- */

const Ring: React.FC<BoxProps> = ({ className }) => (
  <div className={clsx("pointer-events-none absolute rounded-[10px] border-[5px] border-[#f80000] shadow-[2px_3px_4px_rgba(0,0,0,0.45),inset_2px_3px_4px_rgba(0,0,0,0.3)]", className)} />
);

const Step: React.FC<{ n: number; className?: string }> = ({ n, className }) => (
  <svg width="56" height="56" viewBox="0 0 56 56" className={clsx("pointer-events-none absolute drop-shadow-md", className)}>
    <defs>
      <radialGradient id={`ball${n}`} cx=".35" cy=".2" r=".85">
        <stop offset="0" stopColor="#ffa068" />
        <stop offset=".45" stopColor="#ff6f3c" />
        <stop offset="1" stopColor="#fc3509" />
      </radialGradient>
    </defs>
    <circle cx="28" cy="28" r="26.500" fill={`url(#ball${n})`} stroke="#b8341c" />
    <text x="28" y="37" textAnchor="middle" fontFamily="DejaVu Sans, sans-serif" fontSize="25" fontWeight="700" fill="#fff" stroke="#3a3a3a" strokeWidth="3" paintOrder="stroke">
      {n}
    </text>
  </svg>
);

const Watermarks = () => (
  <div aria-hidden="true" className="pointer-events-none absolute inset-0 overflow-hidden">
    <div className="grid w-[876px] grid-cols-3">
      {Array.from({ length: 18 }, (_, i) => (
        <div key={i} className="h-[120px] pt-[43px] pl-5">
          <span className="inline-block -rotate-18 font-['Liberation_Serif',serif] text-[23px] text-[rgba(205,210,245,0.35)] italic [-webkit-text-stroke:1px_rgba(130,140,215,0.28)]">
            Soringperepair.Com
          </span>
        </div>
      ))}
    </div>
  </div>
);

export default function App() {
  return (
    <main className="relative min-h-screen overflow-hidden bg-white pt-8 pr-12 pb-8 pl-8 font-['Open_Sans','Noto_Sans',sans-serif]">
      <div className="relative border-t border-[#2b3440] bg-linear-to-b from-[#c5dbf1] via-[#bcd5ee] to-[#b4d0ea] pb-[6px] pl-[5px] shadow-[4px_6px_18px_4px_rgba(0,0,0,0.5)]">
        <div className="absolute inset-x-0 top-0 h-[50px] bg-linear-to-b from-[#b7d0ea] to-[#eaf2fa]" />
        <div className="relative border-b border-l border-[#6e7f93]">
          <TitleBar />
          <TabStrip />
          <Ribbon />
          <FormulaBar />
          <Sheet />
          <SheetTabs />
          <StatusBar />
        </div>
        <MiniToolbar />
        <ContextMenu />
        <PasteSubmenu />
        <Ring className="top-[219px] left-[296px] h-[130px] w-[188px]" />
        <Ring className="top-[340px] left-[498px] h-[39px] w-[245px]" />
        <Ring className="top-[519px] left-[308px] h-9 w-[166px]" />
        <Step n={1} className="top-[195px] left-[264px]" />
        <Step n={2} className="top-[294px] left-[680px]" />
        <Step n={3} className="top-[527px] left-[274px]" />
      </div>
      <Watermarks />
    </main>
  );
}
